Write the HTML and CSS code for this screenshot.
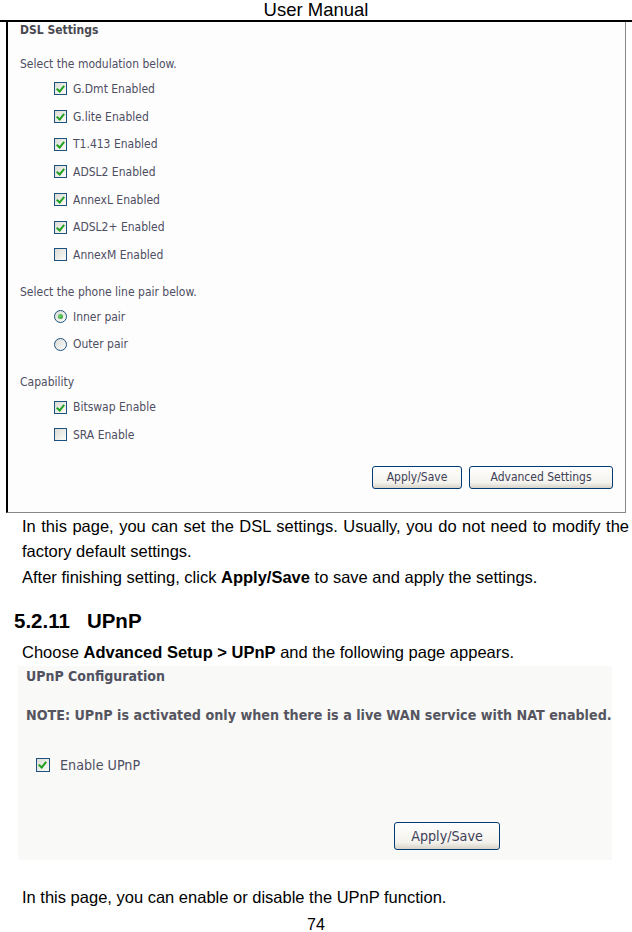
FILE: index.html
```html
<!DOCTYPE html>
<html lang="en">
<head>
  <meta charset="UTF-8">
  <title>User Manual - 74</title>
  <link rel="stylesheet" href="styles.css">
</head>
<body>
  <div class="doc-head">User Manual</div>

  <!-- DSL settings screenshot -->
  <div class="shot dsl">
    <div class="line title">DSL Settings</div>

    <div class="line gap">Select the modulation below.</div>
    <div class="opts">
      <div class="opt"><span class="cb on"></span>G.Dmt Enabled</div>
      <div class="opt"><span class="cb on"></span>G.lite Enabled</div>
      <div class="opt"><span class="cb on"></span>T1.413 Enabled</div>
      <div class="opt"><span class="cb on"></span>ADSL2 Enabled</div>
      <div class="opt"><span class="cb on"></span>AnnexL Enabled</div>
      <div class="opt"><span class="cb on"></span>ADSL2+ Enabled</div>
      <div class="opt"><span class="cb"></span>AnnexM Enabled</div>
    </div>

    <div class="line gap-sm">Select the phone line pair below.</div>
    <div class="opts">
      <div class="opt"><span class="rd on"></span>Inner pair</div>
      <div class="opt"><span class="rd"></span>Outer pair</div>
    </div>

    <div class="line gap-sm cap">Capability</div>
    <div class="opts">
      <div class="opt"><span class="cb on"></span>Bitswap Enable</div>
      <div class="opt"><span class="cb"></span>SRA Enable</div>
    </div>

    <div class="btn-row">
      <button class="btn apply">Apply/Save</button>
      <button class="btn adv">Advanced Settings</button>
    </div>
  </div>

  <div class="doc-text first">
    <p class="justify">In this page, you can set the DSL settings. Usually, you do not need to modify the factory default settings.</p>
    <p>After finishing setting, click <b>Apply/Save</b> to save and apply the settings.</p>
  </div>

  <h2 class="sec"><span class="sec-num">5.2.11</span>UPnP</h2>

  <div class="doc-text choose">
    <p>Choose <b>Advanced Setup &gt; UPnP</b> and the following page appears.</p>
  </div>

  <!-- UPnP screenshot -->
  <div class="shot upnp">
    <div class="up-title">UPnP Configuration</div>
    <div class="up-note">NOTE: UPnP is activated only when there is a live WAN service with NAT enabled.</div>
    <div class="up-opt"><span class="cb big on"></span>Enable UPnP</div>
    <div class="up-btns">
      <button class="btn big">Apply/Save</button>
    </div>
  </div>

  <div class="doc-text after">
    <p>In this page, you can enable or disable the UPnP function.</p>
  </div>

  <div class="page-num">74</div>
</body>
</html>
```

FILE: styles.css
```css
body {
  margin: 0;
  width: 632px;
  font-family: "Liberation Sans", Arial, sans-serif;
  color: #000;
  background: #fff;
}
.doc-head {
  height: 20px;
  line-height: 19px;
  font-size: 18.5px;
  text-align: center;
  border-bottom: 2px solid #000;
}

/* screenshot boxes */
.shot {
  font-family: "DejaVu Sans Condensed", "DejaVu Sans", sans-serif;
  color: #4e4e62;
}
.dsl {
  margin-left: 6px;
  width: 620px;
  background: #fdfdfd;
  border-left: 2px solid #000;
  border-right: 1px solid #888;
  border-bottom: 1px solid #888;
  padding: 0 0 23px 12px;
  box-sizing: border-box;
  font-size: 12px;
}
.line {
  height: 16px;
  line-height: 16px;
}
.title {
  font-weight: bold;
  color: #484850;
}
.gap {
  margin-top: 18px;
}
.gap-sm {
  margin-top: 15px;
}
.gap-sm.cap {
  margin-top: 16px;
}
.opts {
  margin-top: 3px;
}
.opt {
  height: 27.7px;
  display: flex;
  align-items: center;
  gap: 6px;
  padding-left: 34px;
}
.cb, .rd {
  position: relative;
  width: 13px;
  height: 13px;
  box-sizing: border-box;
  border: 1px solid #1c5180;
  background: linear-gradient(135deg, #dcdcd5, #fbfbf9);
  flex: none;
}
.rd {
  border-radius: 50%;
}
.cb.on::after {
  content: "";
  position: absolute;
  left: 3px;
  top: 1px;
  width: 3px;
  height: 6px;
  border: solid #21a121;
  border-width: 0 2px 2px 0;
  transform: rotate(40deg);
}
.rd.on::after {
  content: "";
  position: absolute;
  left: 3px;
  top: 3px;
  width: 5px;
  height: 5px;
  border-radius: 50%;
  background: radial-gradient(circle at 40% 40%, #6fd36f, #1f9a1f);
}
.btn-row {
  display: flex;
  justify-content: flex-end;
  gap: 7px;
  margin-top: 17px;
  padding-right: 12px;
}
.btn {
  height: 23px;
  border: 1px solid #003c74;
  border-radius: 3px;
  background: linear-gradient(#ffffff, #f3f2ec 75%, #d8d3c8);
  font-family: "DejaVu Sans Condensed", "DejaVu Sans", sans-serif;
  font-size: 12px;
  color: #404058;
  padding: 0;
}
.apply {
  width: 90px;
}
.adv {
  width: 144px;
}

/* document text */
.doc-text {
  padding: 0 3px 0 22px;
  font-size: 16.5px;
  line-height: 25.5px;
}
.doc-text p {
  margin: 0;
}
.doc-text .justify {
  text-align: justify;
}
.first {
  padding-top: 1px;
}
.sec {
  margin: 17px 0 0 14px;
  height: 28px;
  line-height: 28px;
  font-size: 20.5px;
  font-weight: bold;
}
.sec-num {
  margin-right: 17px;
}
.choose {
  margin-top: 5px;
}

.upnp {
  margin-left: 18px;
  width: 594px;
  height: 194px;
  background: #f9f9f8;
  padding: 2px 0 0 8px;
  box-sizing: border-box;
}
.up-title {
  font-size: 14px;
  line-height: 16px;
  font-weight: bold;
  color: #505060;
}
.up-note {
  margin-top: 22px;
  font-size: 14.2px;
  line-height: 18px;
  font-weight: bold;
  color: #555560;
  white-space: nowrap;
}
.up-opt {
  margin-top: 32px;
  padding-left: 10px;
  display: flex;
  align-items: center;
  gap: 10px;
  font-size: 14.2px;
  line-height: 18px;
}
.cb.big {
  width: 14px;
  height: 14px;
}
.up-btns {
  margin-top: 48px;
  padding-left: 368px;
}
.btn.big {
  width: 106px;
  height: 28px;
  font-size: 14.2px;
}
.after {
  margin-top: 25px;
}
.page-num {
  margin-top: 8px;
  text-align: center;
  font-size: 16px;
  line-height: 14px;
}
```
